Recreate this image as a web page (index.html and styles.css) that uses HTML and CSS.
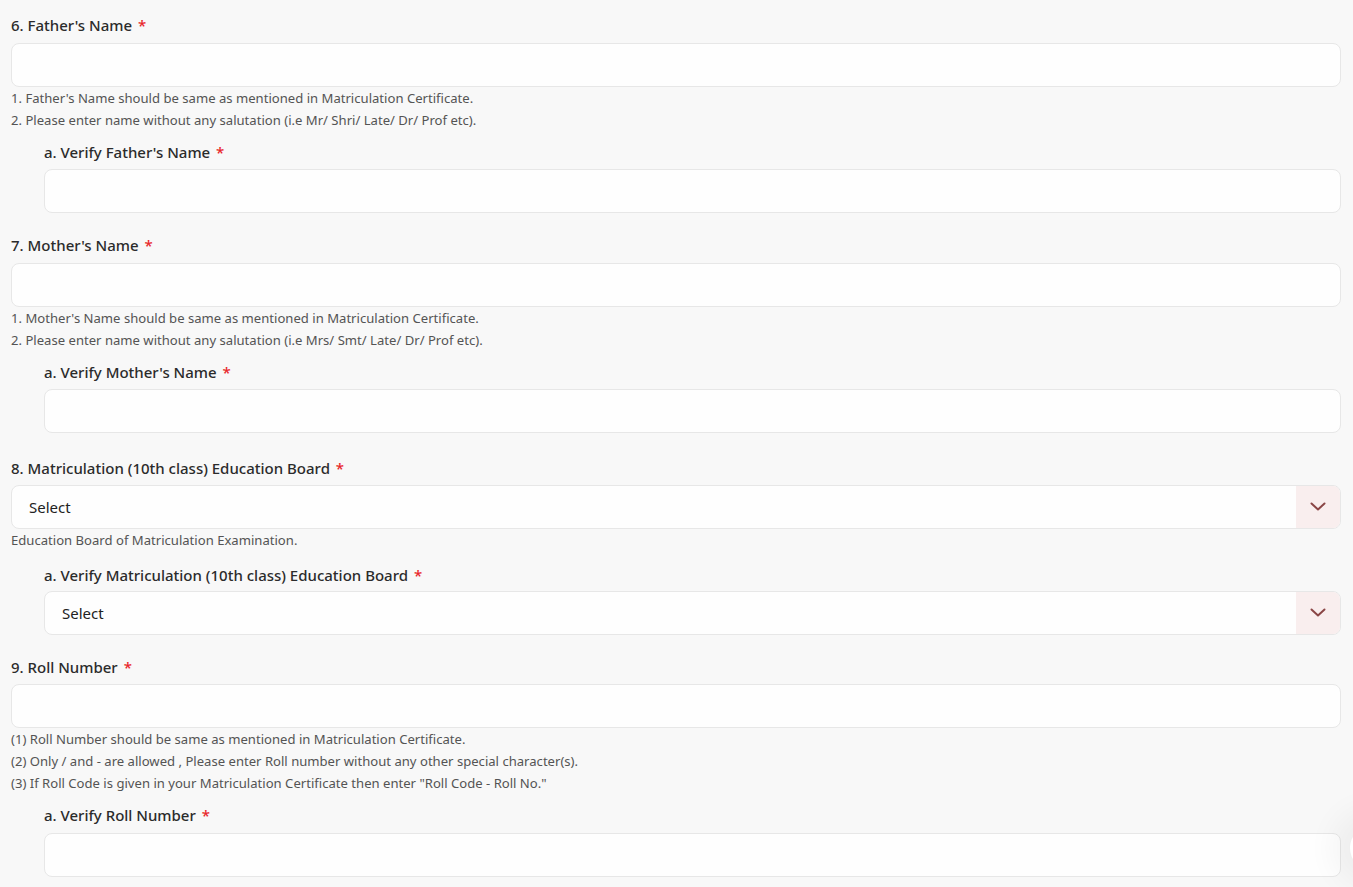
FILE: index.html
```html
<!DOCTYPE html>
<html lang="en">
<head>
<meta charset="utf-8">
<title>Registration – Parent and Matriculation Details</title>
<link rel="stylesheet" href="styles.css">
</head>
<body>
<form class="form">

  <div class="field">
    <label class="label">6. Father's Name <span class="req">*</span></label>
    <input class="input" type="text">
    <div class="help">
      <p>1. Father's Name should be same as mentioned in Matriculation Certificate.</p>
      <p>2. Please enter name without any salutation (i.e Mr/ Shri/ Late/ Dr/ Prof etc).</p>
    </div>
    <div class="sub">
      <label class="label">a. Verify Father's Name <span class="req">*</span></label>
      <input class="input" type="text">
    </div>
  </div>

  <div class="field">
    <label class="label">7. Mother's Name <span class="req">*</span></label>
    <input class="input" type="text">
    <div class="help">
      <p>1. Mother's Name should be same as mentioned in Matriculation Certificate.</p>
      <p>2. Please enter name without any salutation (i.e Mrs/ Smt/ Late/ Dr/ Prof etc).</p>
    </div>
    <div class="sub">
      <label class="label">a. Verify Mother's Name <span class="req">*</span></label>
      <input class="input" type="text">
    </div>
  </div>

  <div class="field field--select">
    <label class="label">8. Matriculation (10th class) Education Board <span class="req">*</span></label>
    <div class="select">
      <span class="select-value">Select</span>
      <span class="select-toggle">
        <svg width="16" height="10" viewBox="0 0 16 10"><path d="M1.5 1.5 L8 7.5 L14.5 1.5" fill="none" stroke="#8a4646" stroke-width="2" stroke-linecap="round" stroke-linejoin="round"/></svg>
      </span>
    </div>
    <div class="help">
      <p>Education Board of Matriculation Examination.</p>
    </div>
    <div class="sub">
      <label class="label">a. Verify Matriculation (10th class) Education Board <span class="req">*</span></label>
      <div class="select">
        <span class="select-value">Select</span>
        <span class="select-toggle">
          <svg width="16" height="10" viewBox="0 0 16 10"><path d="M1.5 1.5 L8 7.5 L14.5 1.5" fill="none" stroke="#8a4646" stroke-width="2" stroke-linecap="round" stroke-linejoin="round"/></svg>
        </span>
      </div>
    </div>
  </div>

  <div class="field field--tight">
    <label class="label">9. Roll Number <span class="req">*</span></label>
    <input class="input" type="text">
    <div class="help">
      <p>(1) Roll Number should be same as mentioned in Matriculation Certificate.</p>
      <p>(2) Only / and - are allowed , Please enter Roll number without any other special character(s).</p>
      <p>(3) If Roll Code is given in your Matriculation Certificate then enter "Roll Code - Roll No."</p>
    </div>
    <div class="sub">
      <label class="label">a. Verify Roll Number <span class="req">*</span></label>
      <input class="input" type="text">
    </div>
  </div>

</form>
<div class="float-btn"></div>
</body>
</html>
```
FILE: styles.css
```css
html, body {
  margin: 0;
  padding: 0;
  background: #f8f8f8;
  overflow: hidden;
}

body {
  font-family: "Noto Sans", "Open Sans", sans-serif;
  color: #2a2a2a;
}

.form {
  padding: 15px 12px 0 11px;
}

.field {
  margin-bottom: 22px;
}

.label {
  display: block;
  font-size: 15px;
  font-weight: 500;
  line-height: 20px;
  color: #2b2b2b;
  margin-bottom: 8px;
}

.sub .label {
  margin-bottom: 7px;
}

.req {
  color: #e8272b;
  margin-left: 2px;
}

.input {
  display: block;
  box-sizing: border-box;
  width: 100%;
  height: 44px;
  margin: 0;
  padding: 0 16px;
  background: #fefefe;
  border: 1px solid #e7e7e7;
  border-radius: 8px;
  font: inherit;
  outline: none;
}

.help {
  font-size: 13.1px;
  line-height: 22px;
  color: #545454;
}

.help p {
  margin: 0;
}

.sub {
  margin-top: 11px;
  padding-left: 33px;
}

/* the board dropdown block sits a little lower, with more room above its sub-field */
.field--select {
  padding-top: 3px;
}

.field--select > .label,
.field--tight > .label {
  margin-bottom: 7px;
}

.field--select .sub {
  margin-top: 14px;
}

.field--select .sub .label {
  margin-bottom: 6px;
}

.field--tight .sub .label {
  margin-bottom: 8px;
}

.select {
  box-sizing: border-box;
  display: flex;
  align-items: stretch;
  height: 44px;
  background: #fefefe;
  border: 1px solid #e7e7e7;
  border-radius: 8px;
  overflow: hidden;
}

.select-value {
  flex: 1;
  display: flex;
  align-items: center;
  padding-left: 17px;
  font-size: 15px;
  color: #222;
}

.select-toggle {
  width: 44px;
  display: flex;
  align-items: center;
  justify-content: center;
  background: #f9eeee;
}

.float-btn {
  position: fixed;
  right: -41px;
  top: 826px;
  width: 44px;
  height: 44px;
  border-radius: 50%;
  background: #ffffff;
  box-shadow: 0 0 30px 18px rgba(0, 0, 0, 0.045);
}
```
